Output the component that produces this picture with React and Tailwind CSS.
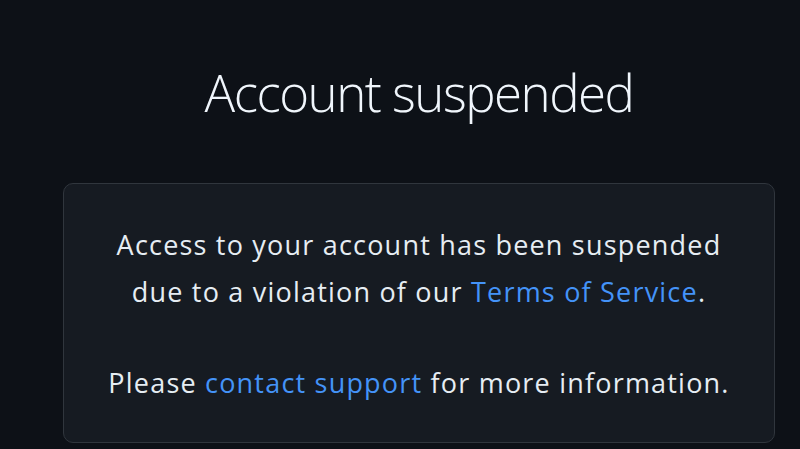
export default function App() {
  return (
    <div
      className="min-h-[449px] bg-[#0d1117] flex flex-col items-center pl-[38px] overflow-hidden"
      style={{ fontFamily: '"Open Sans", "Noto Sans", sans-serif' }}
    >
      <h1 className="mt-[56px] text-[51px] leading-[72px] font-light text-[#f0f6fc] tracking-[-1.5px]">
        Account suspended
      </h1>
      <div className="mt-[55px] w-[712px] h-[260px] shrink-0 rounded-[10px] border border-[#30363d] bg-[#161b22] flex flex-col items-center pt-[37px] text-[27px] leading-[47px] tracking-[1.2px] text-[#e6edf3] text-center">
        <p>
          Access to your account has been suspended
          <br />
          due to a violation of our{" "}
          <a href="#" className="text-[#4493f8]">Terms of Service</a>.
        </p>
        <p className="mt-[44px]">
          Please <a href="#" className="text-[#4493f8]">contact support</a> for more information.
        </p>
      </div>
    </div>
  );
}
